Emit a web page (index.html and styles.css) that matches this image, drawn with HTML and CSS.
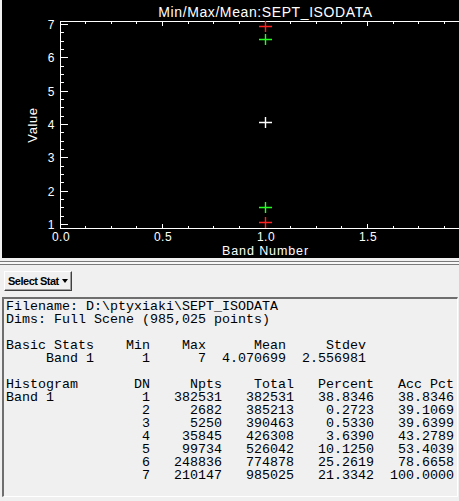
FILE: index.html
```html
<!DOCTYPE html>
<html>
<head>
<meta charset="utf-8">
<link rel="stylesheet" href="styles.css">
</head>
<body>
<div class="window">
  <div class="plot">
    <svg class="chart" width="457" height="258" viewBox="2 0 457 258">
      <text class="title" x="265.5" y="17" text-anchor="middle">Min/Max/Mean:SEPT_ISODATA</text>
      <g class="axes">
        <path d="M60.5 21 V229 M60 21.5 H459 M60 228.5 H459"/>
        <path d="M60 224.5 H68 M60 216.5 H64 M60 207.5 H64 M60 199.5 H64 M60 191.5 H68 M60 182.5 H64 M60 174.5 H64 M60 166.5 H64 M60 157.5 H68 M60 149.5 H64 M60 141.5 H64 M60 132.5 H64 M60 124.5 H68 M60 116.5 H64 M60 107.5 H64 M60 99.5 H64 M60 91.5 H68 M60 82.5 H64 M60 74.5 H64 M60 66.5 H64 M60 57.5 H68 M60 49.5 H64 M60 41.5 H64 M60 32.5 H64 M60 24.5 H68"/>
        <path d="M60.5 228 V224 M85.5 228 V226 M111.5 228 V226 M136.5 228 V226 M162.5 228 V224 M188.5 228 V226 M213.5 228 V226 M239.5 228 V226 M265.5 228 V224 M290.5 228 V226 M316.5 228 V226 M341.5 228 V226 M367.5 228 V224 M393.5 228 V226 M418.5 228 V226 M444.5 228 V226"/>
        <path d="M60.5 22 V26 M85.5 22 V24 M111.5 22 V24 M136.5 22 V24 M162.5 22 V26 M188.5 22 V24 M213.5 22 V24 M239.5 22 V24 M265.5 22 V26 M290.5 22 V24 M316.5 22 V24 M341.5 22 V24 M367.5 22 V26 M393.5 22 V24 M418.5 22 V24 M444.5 22 V24"/>
      </g>
      <g class="ticklabels" text-anchor="end">
        <text x="55" y="229">1</text>
        <text x="55" y="196">2</text>
        <text x="55" y="162">3</text>
        <text x="55" y="129">4</text>
        <text x="55" y="96">5</text>
        <text x="55" y="62">6</text>
        <text x="55" y="29">7</text>
      </g>
      <g class="ticklabels" text-anchor="middle">
        <text x="61" y="240.5">0.0</text>
        <text x="163" y="240.5">0.5</text>
        <text x="266" y="240.5">1.0</text>
        <text x="368" y="240.5">1.5</text>
      </g>
      <text class="axislabel xlabel" x="265.5" y="254.5" text-anchor="middle">Band Number</text>
      <text class="axislabel" transform="translate(37 125) rotate(-90)" text-anchor="middle">Value</text>
      <g class="markers" fill="none" stroke-width="1.4">
        <path stroke="#ff2020" d="M259 26.5 H272 M265.5 21 V32"/>
        <path stroke="#20ff20" d="M259 39.5 H272 M265.5 34 V45"/>
        <path stroke="#ffffff" d="M259 122.5 H272 M265.5 117 V128"/>
        <path stroke="#20ff20" d="M259 207.5 H272 M265.5 202 V213"/>
        <path stroke="#ff2020" d="M259 222.5 H272 M265.5 217 V228"/>
      </g>
    </svg>
  </div>
  <div class="sep"></div>
  <div class="toolbar">
    <div class="select">Select Stat<span class="caret"></span></div>
  </div>
<pre class="report">Filename: D:\ptyxiaki\SEPT_ISODATA
Dims: Full Scene (985,025 points)

Basic Stats    Min    Max      Mean     Stdev
     Band 1      1      7  4.070699  2.556981

Histogram       DN     Npts    Total   Percent   Acc Pct
Band 1           1   382531   382531   38.8346   38.8346
                 2     2682   385213    0.2723   39.1069
                 3     5250   390463    0.5330   39.6399
                 4    35845   426308    3.6390   43.2789
                 5    99734   526042   10.1250   53.4039
                 6   248836   774878   25.2619   78.6658
                 7   210147   985025   21.3342  100.0000
</pre>
</div>
</body>
</html>
```
FILE: styles.css
```css
html, body {
  margin: 0;
  padding: 0;
  background: #f0f0f0;
}
.window {
  width: 459px;
  height: 501px;
  overflow: hidden;
  background: #f0f0f0;
}
.plot {
  margin-left: 2px;
  width: 457px;
  height: 258px;
  background: #000;
}
.chart {
  display: block;
}
.axes path {
  stroke: #fff;
  stroke-width: 1;
  fill: none;
  shape-rendering: crispEdges;
}
.title {
  fill: #fff;
  font-family: "Liberation Sans", Arial, sans-serif;
  font-size: 14px;
  letter-spacing: 0.6px;
}
.ticklabels text {
  fill: #fff;
  font-family: "Liberation Sans", Arial, sans-serif;
  font-size: 12px;
  letter-spacing: 0.5px;
}
.axislabel {
  fill: #fff;
  font-family: "Liberation Sans", Arial, sans-serif;
  font-size: 13px;
  letter-spacing: 0.6px;
}
.xlabel {
  font-size: 12.5px;
  letter-spacing: 0.9px;
}
.sep {
  margin-top: 3px;
  height: 2px;
  background: #f8f8f8;
  border-top: 1px solid #7a7a7a;
  border-bottom: 1px solid #7a7a7a;
}
.toolbar {
  padding: 6px 0 0 4px;
  display: flex;
}
.select {
  box-sizing: border-box;
  width: 68px;
  height: 20px;
  display: flex;
  align-items: center;
  padding-left: 3px;
  padding-right: 3px;
  background: #f0f0f0;
  border-top: 1px solid #ffffff;
  border-left: 1px solid #ffffff;
  border-right: 1px solid #404040;
  border-bottom: 1px solid #404040;
  box-shadow: inset -1px -1px 0 #a0a0a0;
  font-family: "Liberation Sans", Arial, sans-serif;
  font-weight: bold;
  font-size: 11px;
  letter-spacing: -0.5px;
  color: #000;
}
.caret {
  margin-left: auto;
  width: 0;
  height: 0;
  border-left: 3px solid transparent;
  border-right: 3px solid transparent;
  border-top: 4px solid #000;
}
.report {
  box-sizing: border-box;
  margin: 6px 0 0 2px;
  width: 456px;
  height: 200px;
  padding: 1px 0 0 2px;
  border-top: 2px solid #6e6e6e;
  border-left: 2px solid #6e6e6e;
  border-right: 1px solid #ffffff;
  border-bottom: 1px solid #ffffff;
  background: #f0f0f0;
  font-family: "Liberation Mono", "Courier New", monospace;
  font-size: 13.333px;
  line-height: 13px;
  color: #000;
  overflow: hidden;
}
```
